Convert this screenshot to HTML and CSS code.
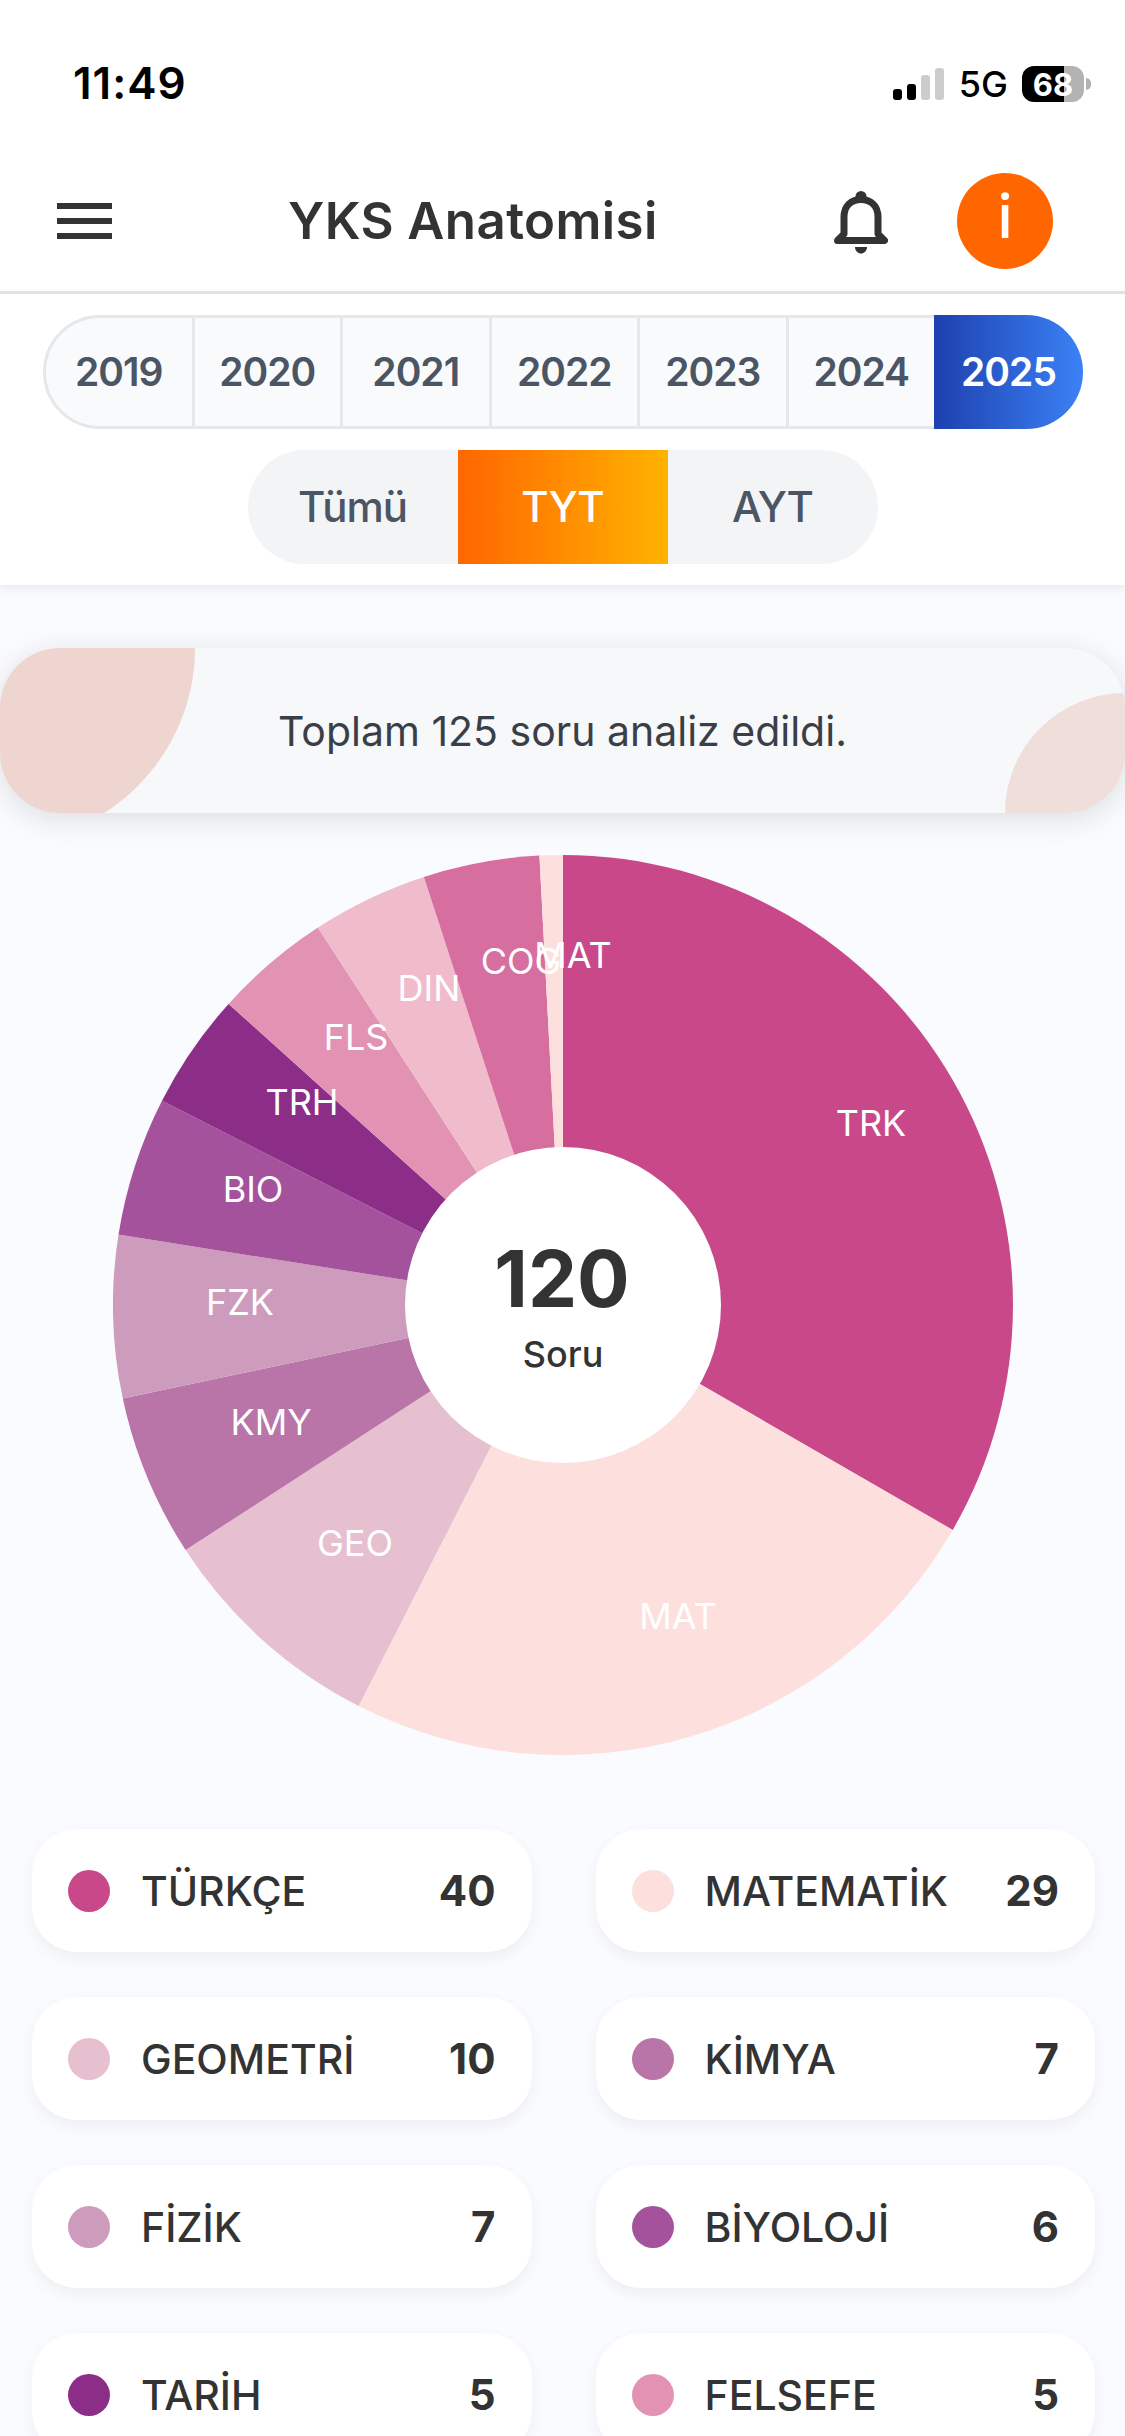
FILE: index.html
```html
<!DOCTYPE html>
<html lang="en">
<head>
    <meta charset="UTF-8">
    <meta name="viewport" content="width=device-width, initial-scale=1.0">
    <title>YKS Anatomisi</title>
    <link rel="stylesheet" href="styles.css">
</head>
<body>

    <div class="status-bar">
        <span class="status-time">11:49</span>
        <div class="status-right">
            <div class="signal">
                <span class="signal-bar bar-1"></span>
                <span class="signal-bar bar-2"></span>
                <span class="signal-bar bar-3 off"></span>
                <span class="signal-bar bar-4 off"></span>
            </div>
            <span class="status-net">5G</span>
            <div class="battery"><span class="battery-text">68</span></div>
            <span class="battery-nub"></span>
        </div>
    </div>

    <div class="app-bar">
        <div class="menu-icon">
            <span></span>
            <span></span>
            <span></span>
        </div>
        <h1 class="app-title">YKS Anatomisi</h1>
        <svg class="bell-icon" viewBox="0 0 54 64" width="54" height="64">
            <circle cx="27" cy="5.5" r="5.5" class="icon-fill"/>
            <path d="M3.5 49.5 L10 43 V26 C10 15 17 8.5 27 8.5 C37 8.5 44 15 44 26 V43 L50.5 49.5 Z" class="icon-line"/>
            <path d="M21 56 H33 C33 60 30 62.5 27 62.5 C24 62.5 21 60 21 56 Z" class="icon-fill"/>
        </svg>
        <div class="avatar">i</div>
    </div>

    <div class="filters">
        <div class="year-tabs">
            <div class="year-tab">2019</div>
            <div class="year-tab">2020</div>
            <div class="year-tab">2021</div>
            <div class="year-tab">2022</div>
            <div class="year-tab">2023</div>
            <div class="year-tab">2024</div>
            <div class="year-tab active">2025</div>
        </div>
        <div class="type-tabs">
            <div class="type-tab">Tümü</div>
            <div class="type-tab active">TYT</div>
            <div class="type-tab">AYT</div>
        </div>
    </div>

    <div class="info-card">
        <span class="info-circle circle-left"></span>
        <span class="info-circle circle-right"></span>
        <p class="info-text">Toplam 125 soru analiz edildi.</p>
    </div>

    <div class="chart">
        <svg class="pie" viewBox="-450 -450 900 900" width="900" height="900">
            <path class="s-trk" d="M0 0 L0 -450 A450 450 0 0 1 389.7 225 Z"/>
            <path class="s-mat" d="M0 0 L389.7 225 A450 450 0 0 1 -204.3 401 Z"/>
            <path class="s-geo" d="M0 0 L-204.3 401 A450 450 0 0 1 -377.4 245.1 Z"/>
            <path class="s-kmy" d="M0 0 L-377.4 245.1 A450 450 0 0 1 -440.2 93.6 Z"/>
            <path class="s-fzk" d="M0 0 L-440.2 93.6 A450 450 0 0 1 -444.5 -70.4 Z"/>
            <path class="s-bio" d="M0 0 L-444.5 -70.4 A450 450 0 0 1 -401 -204.3 Z"/>
            <path class="s-trh" d="M0 0 L-401 -204.3 A450 450 0 0 1 -334.4 -301.1 Z"/>
            <path class="s-fls" d="M0 0 L-334.4 -301.1 A450 450 0 0 1 -245.1 -377.4 Z"/>
            <path class="s-din" d="M0 0 L-245.1 -377.4 A450 450 0 0 1 -139.1 -428 Z"/>
            <path class="s-cog" d="M0 0 L-139.1 -428 A450 450 0 0 1 -23.6 -449.4 Z"/>
            <path class="s-mat" d="M0 0 L-23.6 -449.4 A450 450 0 0 1 0 -450 Z"/>
            <circle class="pie-hole" r="158"/>
            <text class="pie-label" x="308" y="-182">TRK</text>
            <text class="pie-label" x="115" y="311">MAT</text>
            <text class="pie-label" x="-208" y="238">GEO</text>
            <text class="pie-label" x="-292" y="117">KMY</text>
            <text class="pie-label" x="-323" y="-3">FZK</text>
            <text class="pie-label" x="-310" y="-116">BIO</text>
            <text class="pie-label" x="-261" y="-203">TRH</text>
            <text class="pie-label" x="-207" y="-268">FLS</text>
            <text class="pie-label" x="-134" y="-317">DIN</text>
            <text class="pie-label" x="-42" y="-344">COG</text>
            <text class="pie-label" x="10" y="-350">MAT</text>
            <text class="pie-total" x="-1" y="2">120</text>
            <text class="pie-sub" x="0" y="62">Soru</text>
        </svg>
    </div>

    <div class="legend">
        <div class="legend-item"><span class="dot s-trk"></span><span class="legend-name">TÜRKÇE</span><span class="legend-count">40</span></div>
        <div class="legend-item"><span class="dot s-mat"></span><span class="legend-name">MATEMATİK</span><span class="legend-count">29</span></div>
        <div class="legend-item"><span class="dot s-geo"></span><span class="legend-name">GEOMETRİ</span><span class="legend-count">10</span></div>
        <div class="legend-item"><span class="dot s-kmy"></span><span class="legend-name">KİMYA</span><span class="legend-count">7</span></div>
        <div class="legend-item"><span class="dot s-fzk"></span><span class="legend-name">FİZİK</span><span class="legend-count">7</span></div>
        <div class="legend-item"><span class="dot s-bio"></span><span class="legend-name">BİYOLOJİ</span><span class="legend-count">6</span></div>
        <div class="legend-item"><span class="dot s-trh"></span><span class="legend-name">TARİH</span><span class="legend-count">5</span></div>
        <div class="legend-item"><span class="dot s-fls"></span><span class="legend-name">FELSEFE</span><span class="legend-count">5</span></div>
    </div>

</body>
</html>
```

FILE: styles.css
```css
html, body {
    height: 2436px;
    overflow: hidden;
}
body {
    margin: 0;
    background-color: #f9fbff;
    font-family: Inter, "Noto Sans", sans-serif;
    color: #333333;
}

/* status bar */
.status-bar {
    height: 150px;
    box-sizing: border-box;
    padding: 59px 34px 0 73px;
    display: flex;
    justify-content: space-between;
    align-items: flex-start;
    background-color: #fff;
    color: #000;
}
.status-time {
    font-size: 44px;
    font-weight: 600;
    line-height: 48px;
    letter-spacing: 1px;
}
.status-right {
    display: flex;
    align-items: center;
    height: 50px;
}
.signal {
    display: flex;
    align-items: flex-end;
    gap: 5px;
    height: 32px;
    margin-right: 15px;
}
.signal-bar {
    width: 9px;
    border-radius: 3px;
    background-color: #000;
}
.signal-bar.off {
    background-color: #cccccc;
}
.bar-1 { height: 11px; }
.bar-2 { height: 16px; }
.bar-3 { height: 25px; }
.bar-4 { height: 32px; }
.status-net {
    font-size: 36px;
    font-weight: 500;
    margin-right: 14px;
}
.battery {
    width: 62px;
    height: 36px;
    border-radius: 12px;
    background: linear-gradient(to right, #000 68%, #b3b3b3 68%);
    display: flex;
    align-items: center;
    justify-content: center;
}
.battery-text {
    color: #fff;
    font-size: 31px;
    font-weight: 700;
}
.battery-nub {
    width: 5px;
    height: 12px;
    margin-left: 2px;
    border-radius: 0 6px 6px 0;
    background-color: #b3b3b3;
}

/* app bar */
.app-bar {
    height: 141px;
    padding-left: 57px;
    padding-right: 72px;
    display: flex;
    align-items: center;
    background-color: #fff;
    border-bottom: 3px solid #e5e5e5;
}
.menu-icon {
    width: 55px;
    height: 36px;
    display: flex;
    flex-direction: column;
    justify-content: space-between;
}
.menu-icon span {
    display: block;
    height: 6px;
    background-color: #333333;
}
.app-title {
    margin: 0 0 0 176px;
    font-size: 51px;
    font-weight: 600;
    letter-spacing: 0.4px;
    color: #333333;
}
.bell-icon {
    margin-left: auto;
    margin-top: 5px;
}
.icon-fill {
    fill: #333333;
}
.icon-line {
    fill: none;
    stroke: #333333;
    stroke-width: 7;
    stroke-linejoin: round;
}
.avatar {
    width: 96px;
    height: 96px;
    margin-left: 69px;
    border-radius: 50%;
    background-color: #ff6600;
    color: #fff;
    font-size: 60px;
    font-weight: 500;
    line-height: 86px;
    text-align: center;
}

/* filters */
.filters {
    height: 291px;
    box-sizing: border-box;
    padding-top: 21px;
    background-color: #fff;
    box-shadow: 0 3px 12px rgba(0, 0, 0, 0.08);
    position: relative;
}
.year-tabs {
    height: 114px;
    margin: 0 42px 0 43px;
    box-sizing: border-box;
    display: flex;
    border: 3px solid #e5e7eb;
    border-radius: 57px;
    background-color: #f9fafb;
    position: relative;
}
.year-tab {
    flex: 1;
    display: flex;
    align-items: center;
    justify-content: center;
    padding-bottom: 2px;
    border-right: 3px solid #e5e7eb;
    font-size: 39px;
    font-weight: 600;
    letter-spacing: -1px;
    color: #4b5563;
}
.year-tab.active {
    flex: none;
    width: 149px;
    margin: -3px -3px -3px -3px;
    border-right: 0;
    border-radius: 0 57px 57px 0;
    background: linear-gradient(to right, #1e40af, #3b82f6);
    color: #fff;
}
.type-tabs {
    width: 630px;
    height: 114px;
    margin: 21px auto 0;
    display: flex;
    border-radius: 57px;
    background-color: #f3f4f6;
    overflow: hidden;
}
.type-tab {
    flex: 1;
    display: flex;
    align-items: center;
    justify-content: center;
    padding-bottom: 2px;
    font-size: 42px;
    font-weight: 500;
    letter-spacing: -1px;
    color: #4b5563;
}
.type-tab.active {
    background: linear-gradient(to right, #ff6600, #ffb300);
    color: #fff;
}

/* info card */
.info-card {
    height: 165px;
    margin-top: 63px;
    display: flex;
    align-items: center;
    justify-content: center;
    border-radius: 60px;
    background-color: #f7f8fa;
    box-shadow: 0 6px 30px rgba(0, 0, 0, 0.12);
    overflow: hidden;
    position: relative;
}
.info-circle {
    position: absolute;
    border-radius: 50%;
}
.circle-left {
    width: 390px;
    height: 390px;
    top: -195px;
    left: -195px;
    background-color: #efd5d0;
}
.circle-right {
    width: 240px;
    height: 240px;
    bottom: -120px;
    right: -120px;
    background-color: #f0dedb;
}
.info-text {
    margin: 0;
    font-size: 41px;
    color: #3a3f47;
    position: relative;
}

/* pie chart */
.chart {
    margin-top: 42px;
    display: flex;
    justify-content: center;
}
.pie {
    display: block;
}
.pie-hole {
    fill: #fff;
}
.pie-label {
    fill: #fff;
    font-size: 36px;
    text-anchor: middle;
    dominant-baseline: central;
}
.pie-total {
    fill: #333333;
    font-size: 78px;
    font-weight: 700;
    text-anchor: middle;
}
.pie-sub {
    fill: #333333;
    font-size: 36px;
    font-weight: 500;
    text-anchor: middle;
}

/* subject colours */
.s-trk { fill: #c9488a; background-color: #c9488a; }
.s-mat { fill: #fde0dd; background-color: #fde0dd; }
.s-geo { fill: #e6c0cf; background-color: #e6c0cf; }
.s-kmy { fill: #b974a8; background-color: #b974a8; }
.s-fzk { fill: #cd9bbc; background-color: #cd9bbc; }
.s-bio { fill: #a3529b; background-color: #a3529b; }
.s-trh { fill: #8c2e88; background-color: #8c2e88; }
.s-fls { fill: #e293b3; background-color: #e293b3; }
.s-din { fill: #f0bccb; background-color: #f0bccb; }
.s-cog { fill: #d66ea0; background-color: #d66ea0; }

/* legend */
.legend {
    margin: 74px 30px 0 32px;
    display: grid;
    grid-template-columns: 1fr 1fr;
    column-gap: 64px;
    row-gap: 45px;
}
.legend-item {
    height: 123px;
    padding: 0 36px;
    display: flex;
    align-items: center;
    border-radius: 45px;
    background-color: #fff;
    box-shadow: 0 6px 15px rgba(0, 0, 0, 0.05);
}
.dot {
    width: 42px;
    height: 42px;
    border-radius: 50%;
    margin-right: 31px;
}
.legend-name {
    font-size: 41px;
    font-weight: 500;
    color: #333333;
}
.legend-count {
    margin-left: auto;
    font-size: 42px;
    font-weight: 700;
    color: #333333;
}
```
